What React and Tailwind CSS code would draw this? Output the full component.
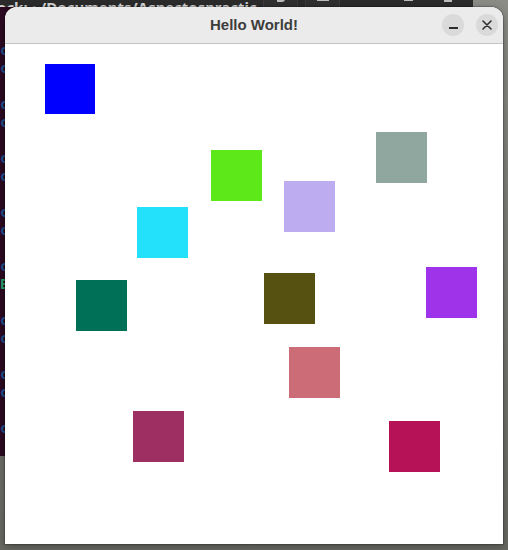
import React from "react";

const lines = ["c", "c", "", "c", "c", "", "c", "c", "", "c", "c", "", "c", "E", "", "c", "c", "", "c", "c", "", "c"];

export default function App() {
  return (
    <div className="relative w-[508px] h-[550px] overflow-hidden bg-linear-to-b from-[#8c8c87] to-[#686863]">
      {/* terminal behind */}
      <div className="absolute left-0 top-[-30px] w-[473px] h-[486px] bg-[#2c0a22] flex flex-col">
        <div className="h-[37px] shrink-0 bg-[#2b2b2b] flex items-end">
          <div className="w-[263px] h-[37px] overflow-hidden relative">
            <div className="absolute left-[-3px] bottom-[-11px] text-[15px] font-bold text-[#d6d6d6] whitespace-nowrap" style={{ fontFamily: '"Noto Sans", sans-serif' }}>
              ock: ~/Documents/Aspectospractic
            </div>
          </div>
          <div className="w-[35px] h-[37px] border-x border-[#3c3c3c] bg-[#303030] flex items-end justify-center">
            <div className="w-[8px] h-[3px] border-b-2 border-r-2 border-[#bdbdbd] rounded-br-[3px] mb-[5px]" />
          </div>
          <div className="w-[7px]" />
          <div className="w-[35px] h-[37px] border-x border-[#3c3c3c] bg-[#303030] flex items-end justify-center">
            <div className="w-[12px] h-[2px] bg-[#bdbdbd] mb-[6px]" />
          </div>
          <div className="flex-1 h-[37px] flex items-end">
            <div className="ml-[64px] w-[9px] h-[2px] bg-[#bdbdbd] mb-[6px]" />
            <div className="ml-[31px] w-[8px] h-[3px] border-b-2 border-x-2 border-[#bdbdbd] mb-[5px]" />
          </div>
        </div>
        <div className="pt-[34px] flex flex-col" style={{ fontFamily: '"DejaVu Sans Mono", monospace' }}>
          {lines.map((c, i) => (
            <div key={i} className={"h-[18px] leading-[18px] text-[14px] font-bold " + (c === "E" ? "text-[#26a269]" : "text-[#1f4f92]")}>
              {c}
            </div>
          ))}
        </div>
      </div>

      {/* window */}
      <div className="absolute left-[5px] top-[7px] w-[498px] h-[537px] rounded-t-[12px] bg-white flex flex-col overflow-hidden shadow-[0_0_0_1px_rgba(0,0,0,0.18),0_2px_8px_rgba(0,0,0,0.35)]">
        <div className="relative h-[37px] shrink-0 bg-[#ebebeb] border-b border-[#c4c4c4] flex items-center justify-center">
          <span className="text-[15px] font-bold text-[#3d3d3d] mt-[1px]" style={{ fontFamily: '"Liberation Sans", Arial, sans-serif' }}>
            Hello World!
          </span>
          <div className="absolute right-[5px] top-[7px] flex gap-[12px]">
            <div className="w-[22px] h-[22px] rounded-full bg-[#dadada] flex items-center justify-center">
              <div className="w-[9px] h-[2px] bg-[#2e2e2e] mt-[5px]" />
            </div>
            <div className="w-[22px] h-[22px] rounded-full bg-[#dadada] flex items-center justify-center">
              <svg width="10" height="10" viewBox="0 0 10 10">
                <path d="M1 1 L9 9 M9 1 L1 9" stroke="#2e2e2e" strokeWidth="1.6" strokeLinecap="round" />
              </svg>
            </div>
          </div>
        </div>
        <div className="relative flex-1 bg-white">
          <div className="absolute left-[40px] top-[20px] w-[50px] h-[50px] bg-[#0000ff]" />
          <div className="absolute left-[206px] top-[106px] w-[51px] h-[51px] bg-[#5de81a]" />
          <div className="absolute left-[279px] top-[137px] w-[51px] h-[51px] bg-[#bdadf0]" />
          <div className="absolute left-[371px] top-[88px] w-[51px] h-[51px] bg-[#8fa79e]" />
          <div className="absolute left-[132px] top-[163px] w-[51px] h-[51px] bg-[#23e1fb]" />
          <div className="absolute left-[71px] top-[236px] w-[51px] h-[51px] bg-[#007157]" />
          <div className="absolute left-[259px] top-[229px] w-[51px] h-[51px] bg-[#575111]" />
          <div className="absolute left-[421px] top-[223px] w-[51px] h-[51px] bg-[#9f33e9]" />
          <div className="absolute left-[284px] top-[303px] w-[51px] h-[51px] bg-[#cc6c77]" />
          <div className="absolute left-[128px] top-[367px] w-[51px] h-[51px] bg-[#9d2f63]" />
          <div className="absolute left-[384px] top-[377px] w-[51px] h-[51px] bg-[#b51258]" />
        </div>
      </div>
    </div>
  );
}
